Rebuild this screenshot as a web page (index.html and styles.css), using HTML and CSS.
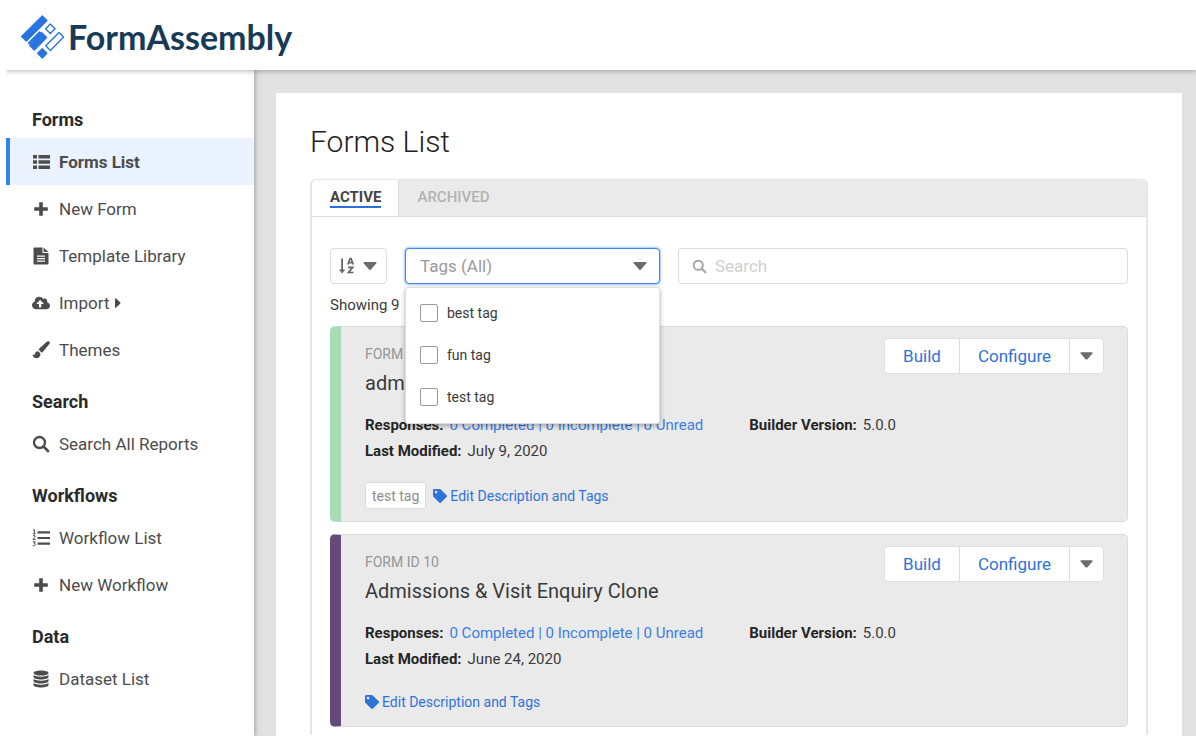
FILE: index.html
```html
<!DOCTYPE html>
<html lang="en">
<head>
<meta charset="utf-8">
<title>Forms List - FormAssembly</title>
<meta name="viewport" content="width=device-width, initial-scale=1">
<link rel="stylesheet" href="styles.css">
</head>
<body>
<svg class="sprite" aria-hidden="true">
  <symbol id="i-plus" viewBox="0 0 18 18"><path d="M7.2 2.2h3.6v5h5v3.6h-5v5H7.2v-5h-5V7.2h5z"/></symbol>
  <symbol id="i-caret" viewBox="0 0 14 8"><path d="M1.200 0h11.600q1.200 .2 .5 1.200L8 7.500q-1 .8-2 0L.7 1.200Q0 .2 1.200 0z"/></symbol>
  <symbol id="i-search" viewBox="0 0 18 18"><circle cx="7.500" cy="7.500" r="5.500" fill="none" stroke="currentColor" stroke-width="2.300"/><path d="M11.500 11.500l4.500 4.500" fill="none" stroke="currentColor" stroke-width="2.600" stroke-linecap="round"/></symbol>
  <symbol id="i-tag" viewBox="0 0 512 512"><path d="M0 252.100V48C0 21.500 21.500 0 48 0h204.100a48 48 0 0 1 33.900 14.100l211.900 211.900c18.700 18.700 18.700 49.100 0 67.900L293.800 497.900c-18.700 18.700-49.100 18.700-67.900 0L14.100 286.100A48 48 0 0 1 0 252.100zM112 64c-26.500 0-48 21.500-48 48s21.500 48 48 48 48-21.500 48-48-21.500-48-48-48z"/></symbol>
</svg>

<header class="topbar">
  <a class="logo" href="#">
    <svg class="logo-mark" viewBox="20 14 45 46" aria-hidden="true">
      <g fill="#2a74e0" stroke="#2a74e0" stroke-width="1.400" stroke-linejoin="round">
        <path d="M42.300 16.100L46.900 20.600 26.400 40.900 21.600 36.400z"/>
        <path d="M41.500 32.600L46.600 37.400 34.300 49.900 29.900 45.600z"/>
        <path d="M28.500 43.100l11-11 1 1-11 11z"/>
        <path d="M42.300 48.800L46.800 53.300 42.300 57.900 37.700 53.300z"/>
      </g>
      <g fill="none" stroke="#2a74e0" stroke-width="1.400" stroke-linejoin="round">
        <path d="M50.300 24L55 28.700 50.300 33.400 45.600 28.700z"/>
        <path d="M59 32.400L63.600 37 50.400 50.400 45.800 45.800z"/>
      </g>
    </svg>
    <span class="logo-text">FormAssembly</span>
  </a>
</header>

<div class="shell">
  <nav class="sidebar" aria-label="Main">
    <h2>Forms</h2>
    <ul>
      <li><a class="active" href="#" aria-current="page"><svg viewBox="0 0 18 18"><path d="M1 2h4v3.500H1zM6.500 2H18v3.500H6.500zM1 7.200h4v3.500H1zM6.500 7.200H18v3.500H6.500zM1 12.400h4v3.500H1zM6.500 12.400H18v3.500H6.500z"/></svg>Forms List</a></li>
      <li><a href="#"><svg><use href="#i-plus"/></svg>New Form</a></li>
      <li><a href="#"><svg viewBox="0 0 18 18"><path fill-rule="evenodd" d="M2.500.5h8V6h6v10.500q0 1-1 1h-13q-1 0-1-1v-15q0-1 1-1zM5 8.500v1.200h8V8.500zM5 11v1.200h8V11zM5 13.500v1.200h8v-1.200zM11.600.6l4.800 4.300h-4.800z"/></svg>Template Library</a></li>
      <li><a href="#"><svg viewBox="0 0 640 512"><path d="M537.600 226.600c4.100-10.700 6.400-22.400 6.400-34.600 0-53-43-96-96-96-19.700 0-38.100 6-53.300 16.200C367 64.200 315.300 32 256 32c-88.400 0-160 71.600-160 160 0 2.700.1 5.400.2 8.100C40.200 219.800 0 273.200 0 336c0 79.500 64.500 144 144 144h368c70.700 0 128-57.300 128-128 0-61.900-44-113.600-102.400-125.400zM393.400 288H328v112c0 8.800-7.200 16-16 16h-48c-8.800 0-16-7.200-16-16V288h-65.400c-14.300 0-21.400-17.200-11.300-27.300l105.400-105.400c6.200-6.200 16.400-6.200 22.600 0l105.400 105.400c10.100 10.100 2.900 27.300-11.300 27.300z"/></svg>Import<svg class="fly" viewBox="0 0 7 12"><path d="M0 1q0-1 1-.5l5 4.700q.8.800 0 1.600l-5 4.700Q0 12 0 11z"/></svg></a></li>
      <li><a href="#"><svg viewBox="0 0 18 18"><path d="M17.300.7c-.8-.7-1.900-.5-2.600.1L7.800 7c-.9.900-1.100 1.500-1 2.300.9.300 1.900 1.100 2.300 2.200.9 0 1.700-.5 2.300-1.300l6-7.100c.6-.8.600-1.700-.1-2.400zM5.600 10.200c-1.500.1-2.300 1.200-2.600 2.500-.2.900-1 1.300-1.700 1.100-.6-.2-.9-.2-.8.300.4 2 2.200 3.200 4.400 3.100 2.300-.2 3.700-1.800 3.500-4.100-.4-1.600-1.500-2.600-2.800-2.900z"/></svg>Themes</a></li>
    </ul>
    <h2>Search</h2>
    <ul>
      <li><a href="#"><svg><use href="#i-search"/></svg>Search All Reports</a></li>
    </ul>
    <h2>Workflows</h2>
    <ul>
      <li><a href="#"><svg viewBox="0 0 18 18"><path d="M5.500 2.300H18v2.200H5.500zM5.500 7.900H18v2.200H5.500zM5.500 13.500H18v2.200H5.500z"/><path fill="none" stroke="currentColor" stroke-width="1" d="M1 1.300l1.300-.6v4M.8 4.800h3M.8 7q1.400-1.200 2.400 0 .2 1-2.300 3.300h3M.8 12.800h2.500l-1.200 1.500q1.500 0 1.300 1.500-.6 1.600-2.700.8"/></svg>Workflow List</a></li>
      <li><a href="#"><svg><use href="#i-plus"/></svg>New Workflow</a></li>
    </ul>
    <h2>Data</h2>
    <ul>
      <li><a href="#"><svg viewBox="0 0 18 18"><path d="M9 .5c4.300 0 7.500 1 7.500 2.500S13.300 5.600 9 5.600 1.500 4.500 1.500 3 4.700.5 9 .5z"/><path d="M1.500 5c1.500 1.300 4.500 1.700 7.500 1.700s6-.4 7.500-1.700v2c0 1.400-3.300 2.500-7.500 2.500S1.500 8.400 1.500 7z"/><path d="M1.500 9c1.500 1.300 4.500 1.700 7.500 1.700s6-.4 7.500-1.700v2c0 1.400-3.300 2.500-7.500 2.500S1.500 12.400 1.500 11z"/><path d="M1.500 13c1.500 1.300 4.500 1.700 7.500 1.700s6-.4 7.500-1.700v2c0 1.400-3.300 2.500-7.500 2.500S1.500 16.400 1.500 15z"/></svg>Dataset List</a></li>
    </ul>
  </nav>

  <main class="content">
    <section class="panel">
      <h1>Forms List</h1>
      <div class="box">
        <div class="tabs" role="tablist">
          <button class="tab current" type="button" role="tab" aria-selected="true"><span>Active</span></button>
          <button class="tab" type="button" role="tab" aria-selected="false"><span>Archived</span></button>
        </div>
        <div class="box-body">
          <div class="toolbar">
            <button class="sort" type="button" aria-label="Sort">
              <svg class="sort-icon" viewBox="0 0 16 18"><path d="M2.200 1.500h1.800v11h2.200L3.100 16.500 0 12.500h2.200z"/><path fill="none" stroke="currentColor" stroke-width="1.700" d="M8.800 7.500l2.300-6h.9l2.300 6M9.700 5.600h3.800M9 10.300h4.800l-4.300 5.200h5"/></svg>
              <svg class="caret"><use href="#i-caret"/></svg>
            </button>
            <div class="tag-filter">
              <select aria-label="Tags"><option>Tags (All)</option></select>
              <svg class="caret"><use href="#i-caret"/></svg>
              <div class="tag-menu">
                <label><input type="checkbox">best tag</label>
                <label><input type="checkbox">fun tag</label>
                <label><input type="checkbox">test tag</label>
              </div>
            </div>
            <div class="search">
              <svg><use href="#i-search"/></svg>
              <input type="search" placeholder="Search" aria-label="Search">
            </div>
          </div>
          <p class="count">Showing 9</p>

          <div class="cards">
            <article class="card green">
              <div class="card-head">
                <div class="card-title">
                  <p>FORM</p>
                  <h3>adm</h3>
                </div>
                <div class="actions">
                  <button type="button">Build</button><button type="button">Configure</button><button class="more" type="button" aria-label="More actions"><svg class="caret"><use href="#i-caret"/></svg></button>
                </div>
              </div>
              <div class="meta">
                <p><b>Responses:</b><a href="#">0 Completed | 0 Incomplete | 0 Unread</a></p>
                <p><b>Builder Version:</b>5.0.0</p>
                <p><b>Last Modified:</b>July 9, 2020</p>
              </div>
              <div class="card-tags">
                <span class="chip">test tag</span>
                <a href="#"><svg><use href="#i-tag"/></svg>Edit Description and Tags</a>
              </div>
            </article>

            <article class="card purple">
              <div class="card-head">
                <div class="card-title">
                  <p>FORM ID 10</p>
                  <h3>Admissions &amp; Visit Enquiry Clone</h3>
                </div>
                <div class="actions">
                  <button type="button">Build</button><button type="button">Configure</button><button class="more" type="button" aria-label="More actions"><svg class="caret"><use href="#i-caret"/></svg></button>
                </div>
              </div>
              <div class="meta">
                <p><b>Responses:</b><a href="#">0 Completed | 0 Incomplete | 0 Unread</a></p>
                <p><b>Builder Version:</b>5.0.0</p>
                <p><b>Last Modified:</b>June 24, 2020</p>
              </div>
              <div class="card-tags">
                <a href="#"><svg><use href="#i-tag"/></svg>Edit Description and Tags</a>
              </div>
            </article>
          </div>
        </div>
      </div>
    </section>
  </main>
</div>
</body>
</html>
```
FILE: styles.css
```css
* { box-sizing: border-box; }

body {
  margin: 0;
  padding: 0 0 12px 6px;
  min-height: 100vh;
  display: flex;
  flex-direction: column;
  background: #fff;
  color: #3a3a3a;
  font: 15px/20px Roboto, "Liberation Sans", sans-serif;
}

h1, h2, h3, p, ul { margin: 0; padding: 0; }
ul { list-style: none; }
a { color: #2f72d9; text-decoration: none; }
svg { fill: currentColor; flex: none; }
button, input, select { font: inherit; color: inherit; margin: 0; }
button { cursor: pointer; }
.sprite { display: none; }

.topbar {
  position: relative;
  z-index: 2;
  display: flex;
  align-items: center;
  height: 70px;
  padding: 4px 14px 0;
  background: #fff;
  box-shadow: 0 1px 5px rgba(0, 0, 0, .3);
  clip-path: inset(0 0 -8px 0);
}
.logo { display: flex; align-items: center; gap: 3px; }
.logo-mark { width: 45px; height: 46px; }
.logo-text {
  color: #173b57;
  font: bold 34px/44px Lato, sans-serif;
}

.shell { display: flex; flex: 1; }

.sidebar {
  position: relative;
  z-index: 1;
  flex: none;
  width: 248px;
  padding-top: 21px;
  background: #fff;
  box-shadow: 1px 0 5px rgba(0, 0, 0, .3);
  clip-path: inset(0 -8px 0 0);
}
.sidebar h2 {
  padding: 19px 26px 8px;
  color: #2b2b2b;
  font-size: 18px;
  font-weight: 700;
  line-height: 20px;
}
.sidebar li a {
  display: flex;
  align-items: center;
  gap: 9px;
  height: 47px;
  padding: 0 22px;
  border-left: 4px solid transparent;
  color: #4c4c4c;
  font-size: 17px;
}
.sidebar li svg { width: 18px; height: 18px; }
.sidebar li a.active {
  border-left-color: #2f85ea;
  background: #e9f2fd;
  font-weight: 700;
}
.sidebar li .fly { width: 6px; height: 12px; margin-left: -4px; }

.content {
  flex: 1;
  min-width: 0;
  display: flex;
  padding: 23px 14px 0 22px;
  background: #e1e1e1;
}
.panel {
  flex: 1;
  min-width: 0;
  padding: 31px 34px 0;
  background: #fff;
}
h1 {
  color: #222;
  font-size: 30px;
  font-weight: 300;
  line-height: 36px;
}

.box {
  margin-top: 19px;
  border: solid #e6e6e6;
  border-width: 1px 2px 0;
  border-radius: 6px 6px 0 0;
}
.tabs {
  display: flex;
  background: #eaeaea;
  border-bottom: 1px solid #e0e0e0;
  border-radius: 5px 5px 0 0;
}
.tab {
  height: 36px;
  padding: 0 18px;
  border: 0;
  background: transparent;
  color: #b2b2b2;
  font-size: 15px;
  font-weight: 500;
  text-transform: uppercase;
}
.tab span { display: block; border-bottom: 2px solid transparent; line-height: 18px; }
.tab.current {
  margin-bottom: -1px;
  padding: 0 17px 0 18px;
  border-right: 1px solid #dcdcdc;
  border-radius: 5px 0 0 0;
  background: #fff;
  color: #444;
  font-weight: 700;
}
.tab.current span { border-bottom-color: #2a6fe0; }

.box-body { padding: 31px 18px 8px; }
.toolbar { display: flex; gap: 18px; height: 36px; }
.caret { width: 14px; height: 8px; color: #6b6b69; }

.sort {
  display: flex;
  align-items: center;
  gap: 8px;
  padding: 0 9px 0 8px;
  border: 1px solid #dcdcdc;
  border-radius: 4px;
  background: #fff;
  color: #666;
}
.sort-icon { width: 16px; height: 18px; }

.tag-filter { position: relative; display: flex; align-items: center; width: 255px; }
.tag-filter select {
  width: 100%;
  height: 36px;
  padding: 0 14px;
  border: 1px solid #3f86ea;
  border-radius: 4px;
  outline: 0;
  box-shadow: 0 0 3px #3f86ea;
  background: #fff;
  color: #9a9a9a;
  font-size: 17px;
  appearance: none;
}
.tag-filter .caret { position: absolute; right: 13px; pointer-events: none; }
.tag-menu {
  position: absolute;
  z-index: 1;
  top: 39px;
  left: 0;
  right: 0;
  padding: 4px 14px 5px;
  border: 1px solid #ddd;
  border-radius: 3px;
  background: #fff;
  box-shadow: 0 2px 5px rgba(0, 0, 0, .3);
}
.tag-menu label {
  display: flex;
  align-items: center;
  gap: 9px;
  height: 42px;
  font-size: 14px;
}
.tag-menu input {
  width: 18px;
  height: 18px;
  border: 1px solid #999;
  border-radius: 2px;
  background: #fff;
  appearance: none;
}

.search {
  flex: 1;
  min-width: 0;
  display: flex;
  align-items: center;
  gap: 8px;
  padding: 0 13px;
  border: 1px solid #dcdcdc;
  border-radius: 4px;
}
.search svg { width: 15px; height: 15px; color: #a5a5a5; }
.search input {
  flex: 1;
  min-width: 0;
  padding: 0;
  border: 0;
  outline: 0;
  background: transparent;
  font-size: 17px;
}
.search input::placeholder { color: #cfcfcf; }

.count { padding: 11px 0; font-size: 15px; }

.cards { display: flex; flex-direction: column; gap: 12px; }
.card {
  padding: 11px 23px 12px 24px;
  border: 1px solid #dadada;
  border-left-width: 11px;
  border-radius: 5px;
  background: #eaeaea;
}
.card.green { border-left-color: #a8dcb5; }
.card.purple { border-left-color: #644a78; }
.card-head { display: flex; justify-content: space-between; align-items: flex-start; }
.card-title { padding-top: 6px; }
.card-title p { color: #959595; font-size: 14px; }
.card-title h3 {
  padding-top: 5px;
  font-size: 20px;
  font-weight: 400;
  line-height: 28px;
}
.actions {
  display: flex;
  border: 1px solid #dedede;
  border-radius: 4px;
  background: #fff;
}
.actions button {
  height: 34px;
  padding: 0 18px;
  border: 0;
  border-left: 1px solid #dedede;
  background: transparent;
  color: #2f72d9;
  font-size: 17px;
}
.actions button:first-child { border-left: 0; }
.actions .more { display: flex; align-items: center; padding: 0 10px; }
.actions .more .caret { width: 13px; }

.meta {
  display: grid;
  grid-template-columns: 52% 1fr;
  padding: 15px 0 18px;
  line-height: 26px;
}
.meta b { margin-right: 6px; color: #262626; }
.meta a { color: #3b7de6; }

.card-tags { display: flex; align-items: center; gap: 7px; min-height: 24px; font-size: 14px; }
.card-tags a { display: flex; align-items: center; gap: 3px; }
.card-tags svg { width: 14px; height: 14px; }
.chip {
  padding: 3px 6px 2px;
  border: 1px solid #dcdcdc;
  border-radius: 3px;
  background: #fff;
  color: #8c8c8c;
}
```
